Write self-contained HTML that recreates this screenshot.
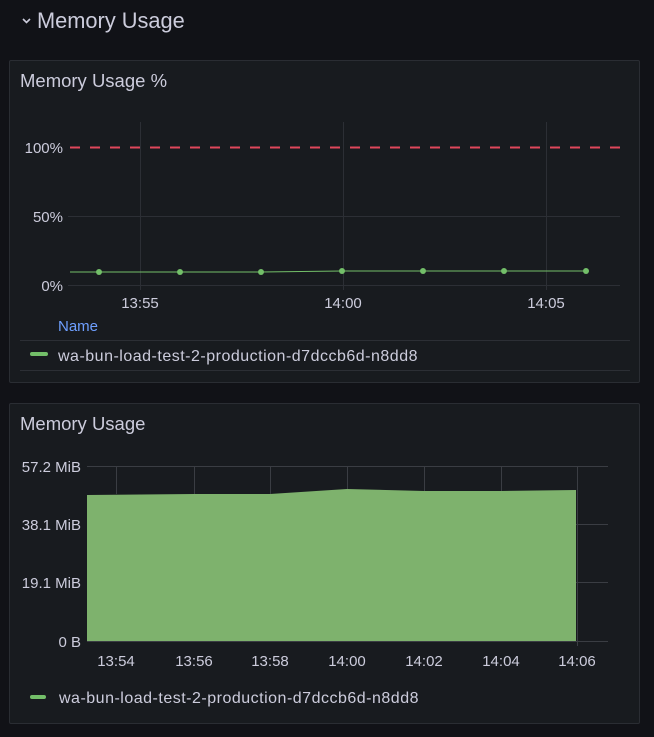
<!DOCTYPE html>
<html><head><style>
body{margin:0;width:654px;height:737px;background:#111217;font-family:"Liberation Sans",sans-serif;overflow:hidden;position:relative}
.p{position:absolute;left:9px;width:629px;background:#181b1f;border:1px solid #2a2d33;border-radius:2px}
.t{position:absolute;color:#ccccdc;font-size:18px}
</style></head><body>
<svg style="position:absolute;left:21px;top:16px" width="12" height="10"><polyline points="2,3 5.5,6.5 9,3" fill="none" stroke="#ccccdc" stroke-width="1.6"/></svg>
<div class="t" style="left:37px;top:8px;font-size:21.8px">Memory Usage</div>
<div class="p" style="top:60px;height:321px"></div>
<div class="p" style="top:403px;height:319px"></div>
<div class="t" style="left:20px;top:70px;font-size:18.5px">Memory Usage %</div>
<div class="t" style="left:20px;top:413px;font-size:18.5px">Memory Usage</div>
<svg width="654" height="737" style="position:absolute;left:0;top:0" font-family="Liberation Sans" font-size="15" fill="#ccccdc">
<g stroke="#2c2f35" stroke-width="1">
<line x1="68" y1="216.5" x2="620" y2="216.5"/><line x1="68" y1="285.5" x2="620" y2="285.5"/>
<line x1="140.5" y1="122" x2="140.5" y2="290"/><line x1="343.5" y1="122" x2="343.5" y2="290"/><line x1="546.5" y1="122" x2="546.5" y2="290"/>
<line x1="20" y1="340.5" x2="630" y2="340.5"/><line x1="20" y1="370.5" x2="630" y2="370.5"/>
</g>
<line x1="70" y1="147.5" x2="620" y2="147.5" stroke="#e0475b" stroke-width="2" stroke-dasharray="10,10"/>
<polyline points="70,272 99,272 180,272 261,272 342,271 423,271 504,271 586,271" fill="none" stroke="#73bf69" stroke-width="1"/>
<g fill="#73bf69"><circle cx="99" cy="272" r="3"/><circle cx="180" cy="272" r="3"/><circle cx="261" cy="272" r="3"/><circle cx="342" cy="271" r="3"/><circle cx="423" cy="271" r="3"/><circle cx="504" cy="271" r="3"/><circle cx="586" cy="271" r="3"/></g>
<text x="63" y="153" text-anchor="end">100%</text><text x="63" y="222" text-anchor="end">50%</text><text x="63" y="291" text-anchor="end">0%</text>
<text x="140" y="308" text-anchor="middle">13:55</text><text x="343" y="308" text-anchor="middle">14:00</text><text x="546" y="308" text-anchor="middle">14:05</text>
<text x="58" y="331" fill="#6e9fff">Name</text>
<rect x="30" y="352" width="18" height="4" rx="2" fill="#73bf69"/>
<text x="58" y="361" font-size="16" letter-spacing="0.5">wa-bun-load-test-2-production-d7dccb6d-n8dd8</text>
<polygon points="87,495 194,494 270,494 347,489 424,491 501,491 576,490 576,641 87,641" fill="#7eb26d"/>
<g stroke="#3a3d43" stroke-width="1">
<line x1="87" y1="466.5" x2="608" y2="466.5"/><line x1="576" y1="524.5" x2="608" y2="524.5"/><line x1="576" y1="582.5" x2="608" y2="582.5"/><line x1="87" y1="641.5" x2="608" y2="641.5"/>
<line x1="116.5" y1="466" x2="116.5" y2="494"/><line x1="194.5" y1="466" x2="194.5" y2="494"/><line x1="270.5" y1="466" x2="270.5" y2="494"/><line x1="347.5" y1="466" x2="347.5" y2="489"/><line x1="424.5" y1="466" x2="424.5" y2="491"/><line x1="501.5" y1="466" x2="501.5" y2="491"/><line x1="577.5" y1="466" x2="577.5" y2="646"/>
</g>
<text x="81" y="472" text-anchor="end">57.2 MiB</text><text x="81" y="530" text-anchor="end">38.1 MiB</text><text x="81" y="588" text-anchor="end">19.1 MiB</text><text x="81" y="647" text-anchor="end">0 B</text>
<g text-anchor="middle"><text x="116" y="666">13:54</text><text x="194" y="666">13:56</text><text x="270" y="666">13:58</text><text x="347" y="666">14:00</text><text x="424" y="666">14:02</text><text x="501" y="666">14:04</text><text x="577" y="666">14:06</text></g>
<rect x="30" y="695" width="16" height="4" rx="2" fill="#73bf69"/>
<text x="59" y="703" font-size="16" letter-spacing="0.5">wa-bun-load-test-2-production-d7dccb6d-n8dd8</text>
</svg>
</body></html>
